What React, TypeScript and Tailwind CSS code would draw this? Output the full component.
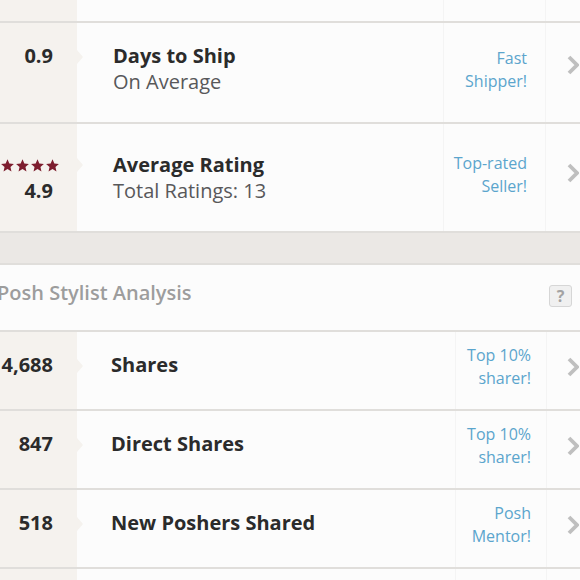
import React from "react";

const stats = [
  { value: "4,688", title: "Shares", label: ["Top 10%", "sharer!"] },
  { value: "847", title: "Direct Shares", label: ["Top 10%", "sharer!"] },
  { value: "518", title: "New Poshers Shared", label: ["Posh", "Mentor!"] },
];

function Chevron() {
  return (
    <svg width="12" height="20" viewBox="0 0 12 20" fill="none">
      <path d="M2 2l8 8-8 8" stroke="#bfbfbf" strokeWidth="3.8" />
    </svg>
  );
}

function Star() {
  return (
    <svg width="13" height="13" viewBox="1 1 22 22" className="shrink-0">
      <path
        d="M12 1.5l3.1 7.1 7.7.7-5.8 5.1 1.7 7.6L12 18l-6.7 4 1.7-7.6-5.8-5.1 7.7-.7z"
        fill="#7d1d2e"
      />
    </svg>
  );
}

function Notch({ top }: { top: string }) {
  return (
    <div
      className={`absolute left-full ${top} h-0 w-0 -translate-y-1/2 border-y-[7px] border-l-[6px] border-y-transparent border-l-[#f5f2ee]`}
    />
  );
}

export default function App() {
  return (
    <div className="h-[580px] w-[580px] overflow-hidden bg-[#fcfcfc] font-['Open_Sans',sans-serif]">
      {/* top partial row */}
      <div className="flex h-[23px] border-b-2 border-[#e0dedb]">
        <div className="w-[77px] shrink-0 bg-[#f5f2ee]" />
        <div className="w-[366px]" />
        <div className="w-[102px] border-l border-[#f4f4f4]" />
        <div className="flex-1 border-l border-[#f4f4f4]" />
      </div>

      {/* Days to Ship */}
      <div className="flex h-[101px] border-b-2 border-[#e0dedb]">
        <div className="relative w-[77px] shrink-0 bg-[#f5f2ee] pr-[24px] pt-[20px] text-right text-[20px] leading-[26px] font-bold text-[#2b2b2b]">
          0.9
          <Notch top="top-[34px]" />
        </div>
        <div className="w-[366px] pl-[36px] pt-[20px] text-[20px] leading-[26px]">
          <div className="font-bold text-[#2b2b2b]">Days to Ship</div>
          <div className="text-[#58585a]">On Average</div>
        </div>
        <div className="w-[102px] border-l border-[#f4f4f4] pr-[18px] pt-[24px] text-right text-[16px] leading-[23px] text-[#5ba5cd]">
          <div>Fast</div>
          <div>Shipper!</div>
        </div>
        <div className="flex-1 border-l border-[#f4f4f4] pl-[21px] pt-[32px]">
          <Chevron />
        </div>
      </div>

      {/* Average Rating */}
      <div className="flex h-[109px] border-b-2 border-[#e0dedb]">
        <div className="relative w-[77px] shrink-0 bg-[#f5f2ee] pt-[28px] text-[20px] leading-[26px] font-bold text-[#2b2b2b]">
          <div className="flex h-[26px] items-center justify-end gap-[2px] pr-[18px]">
            <Star />
            <Star />
            <Star />
            <Star />
            <Star />
          </div>
          <div className="pr-[24px] text-right">4.9</div>
          <Notch top="top-[41px]" />
        </div>
        <div className="w-[366px] pl-[36px] pt-[28px] text-[20px] leading-[26px]">
          <div className="font-bold text-[#2b2b2b]">Average Rating</div>
          <div className="text-[#58585a]">Total Ratings: 13</div>
        </div>
        <div className="w-[102px] border-l border-[#f4f4f4] pr-[18px] pt-[28px] text-right text-[16px] leading-[23px] text-[#5ba5cd]">
          <div>Top-rated</div>
          <div>Seller!</div>
        </div>
        <div className="flex-1 border-l border-[#f4f4f4] pl-[21px] pt-[39px]">
          <Chevron />
        </div>
      </div>

      {/* band */}
      <div className="h-[32px] border-b-2 border-[#e0dedb] bg-[#ebe8e5]" />

      {/* section header */}
      <div className="flex h-[67px] items-start justify-between border-b-2 border-[#e0dedb] pt-[15px]">
        <div className="-ml-[3px] text-[20px] leading-[26px] font-semibold text-[#9d9d9d]">
          Posh Stylist Analysis
        </div>
        <div className="mr-[8px] mt-[5px] flex h-[22px] w-[23px] items-center justify-center rounded-[3px] border border-[#d6d6d6] bg-[#f0f0f0] text-[16px] font-bold text-[#a3a3a3]">
          ?
        </div>
      </div>

      {stats.map((s) => (
        <div key={s.title} className="flex h-[79px] border-b-2 border-[#e0dedb]">
          <div className="relative w-[77px] shrink-0 whitespace-nowrap bg-[#f5f2ee] pr-[24px] pt-[20px] text-right text-[20px] leading-[26px] font-bold text-[#2b2b2b]">
            <div className="flex justify-end">{s.value}</div>
            <Notch top="top-[34px]" />
          </div>
          <div className="w-[378px] pl-[34px] pt-[20px] text-[20px] leading-[26px] font-bold text-[#2b2b2b]">
            {s.title}
          </div>
          <div className="w-[91px] border-l border-[#f4f4f4] pr-[15px] pt-[12px] text-right text-[16px] leading-[23px] text-[#5ba5cd]">
            <div>{s.label[0]}</div>
            <div>{s.label[1]}</div>
          </div>
          <div className="flex-1 border-l border-[#f4f4f4] pl-[20px] pt-[25px]">
            <Chevron />
          </div>
        </div>
      ))}

      {/* next row, cut off by the window */}
      <div className="flex h-[79px]">
        <div className="w-[77px] shrink-0 bg-[#f5f2ee]" />
        <div className="w-[378px]" />
        <div className="w-[91px] border-l border-[#f4f4f4]" />
        <div className="flex-1 border-l border-[#f4f4f4]" />
      </div>
    </div>
  );
}
